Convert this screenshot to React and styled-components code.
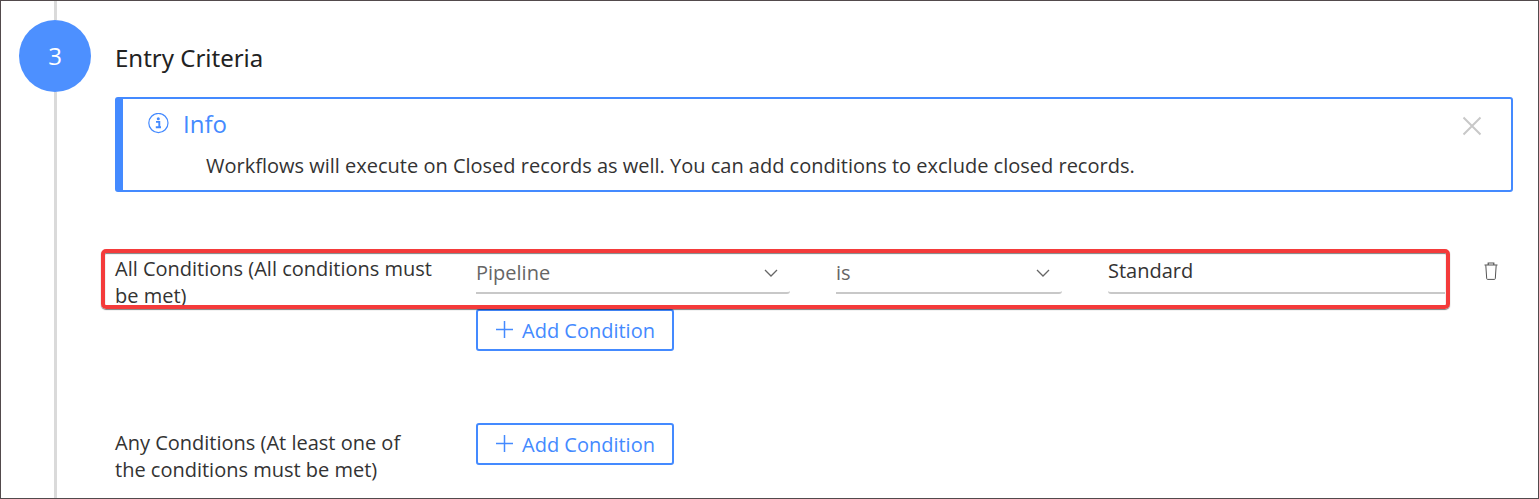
import { useState } from 'react'
import styled, { createGlobalStyle } from 'styled-components'

const criteria = [
  {
    id: 'all',
    label: 'All Conditions (All conditions must be met)',
    highlighted: true,
    conditions: [{ id: 1, field: 'Pipeline', operator: 'is', value: 'Standard' }],
  },
  {
    id: 'any',
    label: 'Any Conditions (At least one of the conditions must be met)',
    highlighted: false,
    conditions: [],
  },
]

function InfoIcon() {
  return (
    <svg width="22" height="22" viewBox="0 0 22 22" fill="none" aria-hidden="true">
      <circle cx="11.4" cy="10" r="9.6" stroke="currentColor" strokeWidth="1.2" />
      <circle cx="11.3" cy="5.8" r="1.5" fill="currentColor" />
      <path d="M9 8.9h3.3v5.4M8.8 14.2h5.2" stroke="currentColor" strokeWidth="1.9" />
    </svg>
  )
}

function CloseIcon() {
  return (
    <svg width="20" height="20" viewBox="0 0 20 20" fill="none" aria-hidden="true">
      <path d="M1.5 1.5l17 17M18.5 1.5l-17 17" stroke="currentColor" strokeWidth="2" />
    </svg>
  )
}

function ChevronIcon() {
  return (
    <svg width="14" height="8" viewBox="0 0 14 8" fill="none" aria-hidden="true">
      <path d="M1 1l6 6 6-6" stroke="currentColor" strokeWidth="1.3" />
    </svg>
  )
}

function PlusIcon() {
  return (
    <svg width="18" height="18" viewBox="0 0 18 18" fill="none" aria-hidden="true">
      <path d="M9.5 0v17M1 8.5h17" stroke="currentColor" strokeWidth="1.5" />
    </svg>
  )
}

function TrashIcon() {
  return (
    <svg width="14" height="18" viewBox="0 0 14 18" fill="none" aria-hidden="true">
      <path d="M.5 3h13M4.2 3V1h5.6v2" stroke="currentColor" strokeWidth="1.2" />
      <path d="M1.8 3.2l.9 13.4q.1.8.8.8h7q.7 0 .8-.8l.9-13.4" stroke="currentColor" />
    </svg>
  )
}

function SelectField({ label, value, options }) {
  return (
    <SelectBox>
      <Select aria-label={label} defaultValue={value}>
        {options.map((option) => (
          <option key={option}>{option}</option>
        ))}
      </Select>
      <ChevronIcon />
    </SelectBox>
  )
}

function App() {
  const [infoOpen, setInfoOpen] = useState(true)

  return (
    <>
      <GlobalStyle />
      <Page>
        <Rail>
          <Line $top />
          <StepNumber>3</StepNumber>
          <Line />
        </Rail>
        <Content>
          <Heading>Entry Criteria</Heading>
          {infoOpen && (
            <InfoCard>
              <InfoHeader>
                <InfoIcon />
                <InfoTitle>Info</InfoTitle>
                <CloseButton aria-label="Close" onClick={() => setInfoOpen(false)}>
                  <CloseIcon />
                </CloseButton>
              </InfoHeader>
              <InfoText>
                Workflows will execute on Closed records as well. You can add conditions to exclude
                closed records.
              </InfoText>
            </InfoCard>
          )}
          <Groups>
            {criteria.map((group) => (
              <Group key={group.id}>
                <GroupLabel $empty={group.conditions.length === 0}>{group.label}</GroupLabel>
                <GroupBody>
                  {group.conditions.map((condition) => (
                    <Condition key={condition.id}>
                      <Fields>
                        <SelectField label="Field" value={condition.field} options={['Pipeline']} />
                        <SelectField
                          label="Operator"
                          value={condition.operator}
                          options={['is', 'is not']}
                        />
                        <Input aria-label="Value" defaultValue={condition.value} />
                      </Fields>
                      <DeleteButton aria-label="Delete condition">
                        <TrashIcon />
                      </DeleteButton>
                    </Condition>
                  ))}
                  <AddButton>
                    <PlusIcon />
                    Add Condition
                  </AddButton>
                </GroupBody>
                {group.highlighted && <Highlight />}
              </Group>
            ))}
          </Groups>
        </Content>
      </Page>
    </>
  )
}

export default App

const GlobalStyle = createGlobalStyle`
  * {
    box-sizing: border-box;
  }

  body {
    margin: 0;
    background-color: #fff;
    color: #333;
    font-family: 'Open Sans', 'Noto Sans', sans-serif;
    font-size: 20px;
  }

  button,
  input,
  select {
    margin: 0;
    padding: 0;
    border: none;
    background: none;
    color: inherit;
    font: inherit;
  }

  svg {
    display: block;
    flex-shrink: 0;
  }
`

const Page = styled.div`
  min-height: 100vh;
  display: flex;
  gap: 24px;
  padding: 0 25px 0 18px;
  border: 1px solid #524a4c;
`

const Rail = styled.div`
  width: 72px;
  flex-shrink: 0;
  display: flex;
  flex-direction: column;
  align-items: center;
`

const Line = styled.div`
  width: 3px;
  flex: ${(props) => (props.$top ? '0 0 19px' : '1')};
  background-color: #dadada;
`

const StepNumber = styled.div`
  width: 72px;
  height: 72px;
  display: flex;
  align-items: center;
  justify-content: center;
  padding-bottom: 2px;
  border-radius: 50%;
  background-color: #4d90ff;
  color: #fff;
  font-size: 24px;
`

const Content = styled.main`
  flex: 1;
  min-width: 0;
  padding-top: 40px;
`

const Heading = styled.h1`
  margin: 0 0 22px;
  color: #222;
  font-family: 'Noto Sans', sans-serif;
  font-size: 24px;
  font-weight: 400;
  line-height: 34px;
`

const InfoCard = styled.section`
  padding: 8px 29px 8px 24px;
  border: 2px solid #448aff;
  border-left-width: 8px;
  border-radius: 3px;
`

const InfoHeader = styled.div`
  display: flex;
  align-items: center;
  gap: 14px;
  color: #448aff;
`

const InfoTitle = styled.h2`
  flex: 1;
  margin: 0;
  font-size: 24px;
  font-weight: 400;
  line-height: 34px;
`

const CloseButton = styled.button`
  padding-top: 3px;
  color: #c8c8c8;
  cursor: pointer;
`

const InfoText = styled.p`
  margin: 9px 0 0 59px;
  line-height: 32px;
`

const Groups = styled.div`
  display: flex;
  flex-direction: column;
  gap: 72px;
  padding-top: 60px;
`

const Group = styled.section`
  position: relative;
  display: grid;
  grid-template-columns: 320px 1fr;
  column-gap: 41px;
`

const GroupLabel = styled.div`
  padding-top: ${(props) => (props.$empty ? '6px' : '3px')};
  line-height: 27px;
`

const GroupBody = styled.div`
  display: flex;
  flex-direction: column;
  align-items: flex-start;
`

const Condition = styled.div`
  width: 100%;
  display: flex;
  align-items: flex-start;
  gap: 39px;
  padding: 0 15px 15px 0;
`

const Fields = styled.div`
  flex: 1;
  display: grid;
  grid-template-columns: 314fr 226fr 337fr;
  column-gap: 46px;
`

const SelectBox = styled.div`
  display: grid;
  align-items: center;
  color: #666;

  > * {
    grid-area: 1 / 1;
  }

  svg {
    justify-self: end;
    margin-right: 12px;
    pointer-events: none;
  }
`

const Select = styled.select`
  width: 100%;
  height: 42px;
  border-bottom: 2px solid #c8c8c8;
  border-bottom-right-radius: 3px;
  appearance: none;
`

const Input = styled.input`
  width: 100%;
  height: 42px;
  padding-bottom: 4px;
  border-bottom: 2px solid #c8c8c8;
  border-bottom-left-radius: 3px;
`

const DeleteButton = styled.button`
  padding-top: 10px;
  color: #555;
  cursor: pointer;
`

const AddButton = styled.button`
  height: 42px;
  display: flex;
  align-items: center;
  gap: 9px;
  padding: 0 17px;
  border: 2px solid #448aff;
  border-radius: 3px;
  color: #448aff;
  cursor: pointer;
`

const Highlight = styled.div`
  position: absolute;
  top: -3px;
  left: -14px;
  right: 63px;
  height: 60px;
  border: 4px solid #f43b3b;
  border-radius: 5px;
  box-shadow: 0 1px 1px rgba(0, 0, 0, 0.5), inset 0 1px 1px rgba(0, 0, 0, 0.5);
  pointer-events: none;
`
